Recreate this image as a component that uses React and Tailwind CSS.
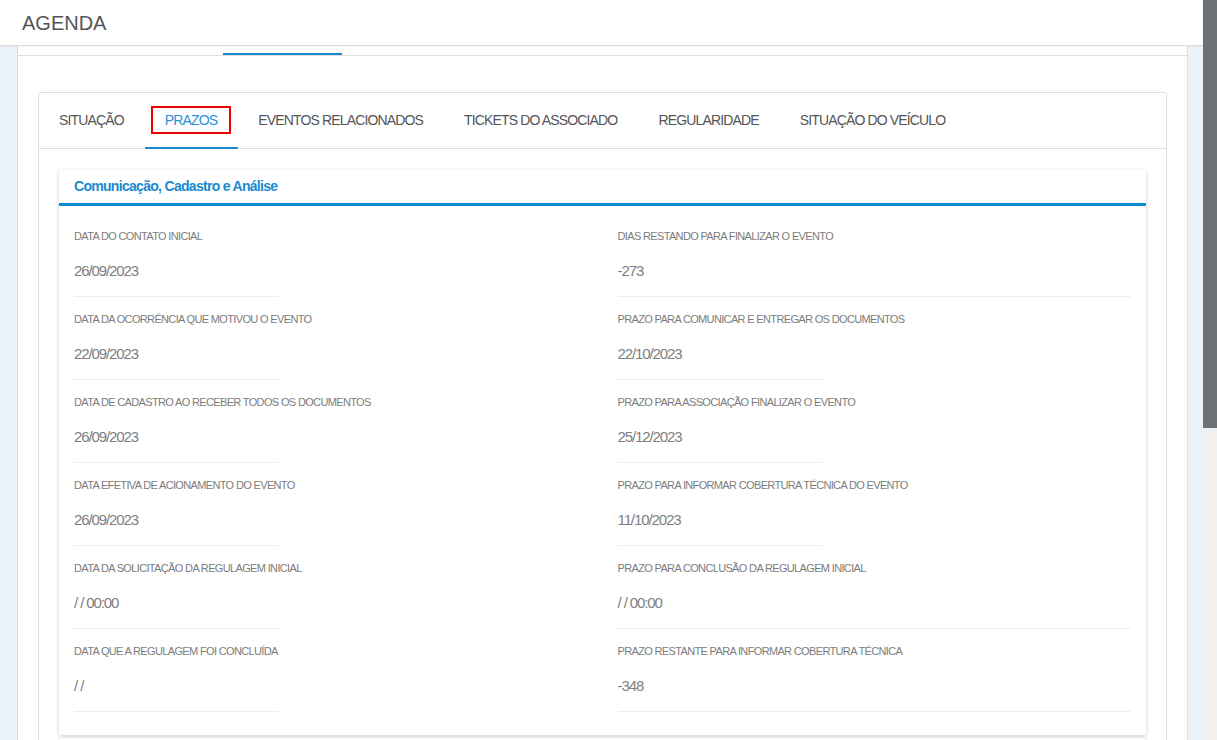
import React from 'react';

const tabs = ['SITUAÇÃO', 'PRAZOS', 'EVENTOS RELACIONADOS', 'TICKETS DO ASSOCIADO', 'REGULARIDADE', 'SITUAÇÃO DO VEÍCULO'];

const rows = [
  [
    { label: 'DATA DO CONTATO INICIAL', value: '26/09/2023', wide: false },
    { label: 'DIAS RESTANDO PARA FINALIZAR O EVENTO', value: '-273', wide: true },
  ],
  [
    { label: 'DATA DA OCORRÊNCIA QUE MOTIVOU O EVENTO', value: '22/09/2023', wide: false },
    { label: 'PRAZO PARA COMUNICAR E ENTREGAR OS DOCUMENTOS', value: '22/10/2023', wide: false },
  ],
  [
    { label: 'DATA DE CADASTRO AO RECEBER TODOS OS DOCUMENTOS', value: '26/09/2023', wide: false },
    { label: 'PRAZO PARA ASSOCIAÇÃO FINALIZAR O EVENTO', value: '25/12/2023', wide: false },
  ],
  [
    { label: 'DATA EFETIVA DE ACIONAMENTO DO EVENTO', value: '26/09/2023', wide: false },
    { label: 'PRAZO PARA INFORMAR COBERTURA TÉCNICA DO EVENTO', value: '11/10/2023', wide: false },
  ],
  [
    { label: 'DATA DA SOLICITAÇÃO DA REGULAGEM INICIAL', value: '/ / 00:00', wide: false },
    { label: 'PRAZO PARA CONCLUSÃO DA REGULAGEM INICIAL', value: '/ / 00:00', wide: true },
  ],
  [
    { label: 'DATA QUE A REGULAGEM FOI CONCLUÍDA', value: '/ /', wide: false },
    { label: 'PRAZO RESTANTE PARA INFORMAR COBERTURA TÉCNICA', value: '-348', wide: true },
  ],
];

function Field({ label, value, wide }) {
  return (
    <div className="px-[15px] pt-[16px]">
      <div className={`${wide ? 'w-full' : 'w-[205px]'} border-b border-[#eeeeee] pb-[15px]`}>
        <div className="text-[11px] leading-[13px] tracking-[-0.65px] text-[#7c7c7c] whitespace-nowrap">{label}</div>
        <div className="mt-[18px] text-[15px] leading-[20px] tracking-[-1.1px] text-[#808080]">{value}</div>
      </div>
    </div>
  );
}

export default function App() {
  return (
    <div
      className="flex h-[740px] w-full overflow-hidden bg-[#eaf2fa]"
      style={{ fontFamily: '"Liberation Sans", Arial, sans-serif' }}
    >
      <div className="flex min-w-0 flex-1 flex-col">
        <header className="relative z-10 flex h-[46px] shrink-0 items-center border-b border-[#dddddd] bg-white pl-[22px] shadow-[0_1px_2px_rgba(0,0,0,0.04)]">
          <h1 className="text-[20px] font-normal text-[#555]">AGENDA</h1>
        </header>
        <div className="flex min-h-0 flex-1">
          <div className="w-[17px] shrink-0 bg-[#eaf1f9]" />
          <div className="flex min-w-0 flex-1 flex-col border-x border-[#dddddd] bg-white">
            <div className="flex h-[10px] shrink-0 border-b border-[#dddddd]">
              <div className="w-[205px]" />
              <div className="flex w-[119px] flex-col justify-end">
                <div className="h-[2px] bg-[#1a8ad0]" />
              </div>
            </div>
            <div className="pl-[20px] pr-[20px] pt-[36px]">
              <div className="rounded-[3px] border border-[#dddddd]">
                <div className="flex h-[56px] border-b border-[#dddddd]">
                  {tabs.map((t) => {
                    const active = t === 'PRAZOS';
                    return (
                      <div
                        key={t}
                        className={`flex items-center pl-[20px] pr-[21px] text-[14px] tracking-[-0.85px] ${
                          active ? 'border-b-2 border-[#1a8ad0] -mb-px text-[#2a8fd6]' : 'text-[#555]'
                        }`}
                      >
                        {active ? (
                          <span className="-mx-[14px] flex h-[28px] items-center border-2 border-[#ee0000] px-[12px]">{t}</span>
                        ) : (
                          t
                        )}
                      </div>
                    );
                  })}
                </div>
                <div className="px-[20px] pb-[20px] pt-[21px]">
                  <div className="rounded-[3px] bg-white pb-[23px] shadow-[0_1px_4px_rgba(0,0,0,0.2)]">
                    <div className="flex h-[36px] items-center border-b-[3px] border-[#0a8ad2] px-[15px] text-[14px] font-semibold tracking-[-0.7px] text-[#1a8ad0]">
                      Comunicação, Cadastro e Análise
                    </div>
                    <div className="pt-[8px]">
                      {rows.map((r, i) => (
                        <div key={i} className="grid grid-cols-2">
                          <Field {...r[0]} />
                          <Field {...r[1]} />
                        </div>
                      ))}
                    </div>
                  </div>
                  <div className="mt-[3px] h-[40px] rounded-[3px] bg-white shadow-[0_1px_4px_rgba(0,0,0,0.2)]" />
                </div>
              </div>
            </div>
          </div>
          <div className="w-[15px] shrink-0 bg-[#eaf2fa]" />
        </div>
      </div>
      <div className="flex w-[14px] shrink-0 flex-col bg-[#f1f1f1]">
        <div className="h-[428px] bg-[#6e7173]" />
      </div>
    </div>
  );
}
